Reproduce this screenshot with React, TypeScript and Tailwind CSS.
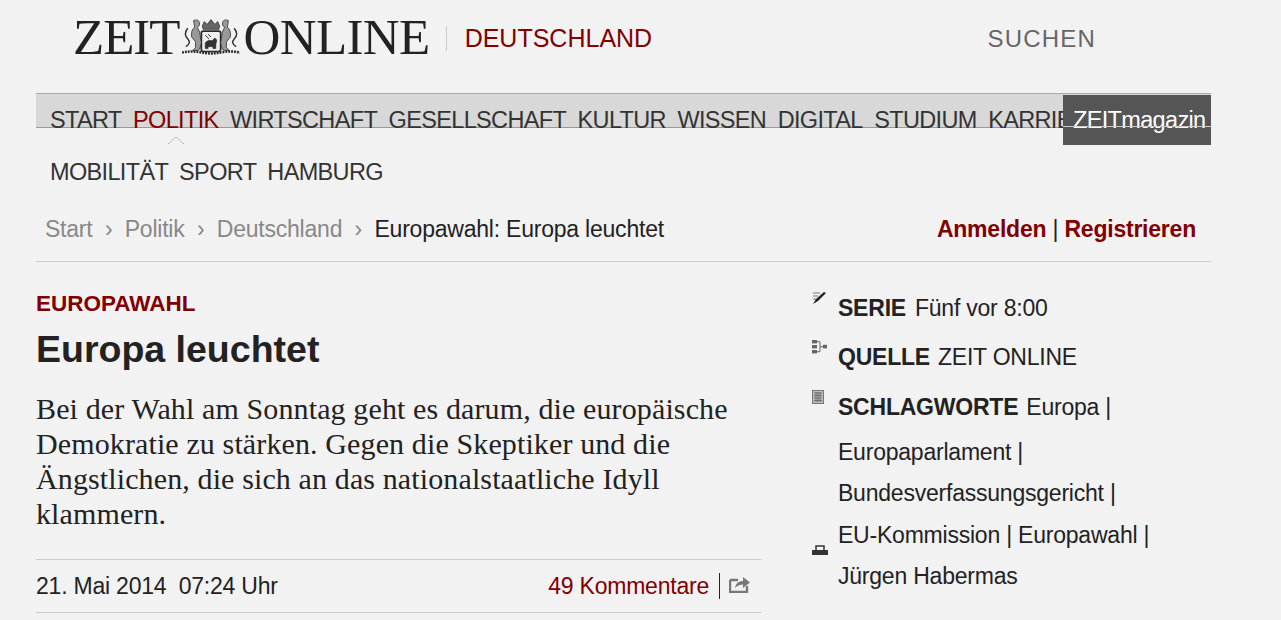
const sans = "font-['Liberation_Sans',Arial,sans-serif]";

function Crest() {
  return (
    <svg width="58" height="38" viewBox="0 0 60 38" fill="none" stroke="#2b2b2b" strokeWidth="1.1" className="ml-[3px] mr-[3px] shrink-0">
      <path d="M21 8 L23 3 L26 6 L30 1 L34 6 L37 3 L39 8 L38 11 H22 Z" fill="#666" strokeWidth="0.8" />
      <rect x="20" y="13" width="20" height="21" rx="2" fill="#eee" strokeWidth="1.8" />
      <path d="M24 25 q3 -4 7 -2 l3 -3 2 2 -1 5 v4 h-3 v-2 h-5 v2 h-3 Z" fill="#333" strokeWidth="0.6" />
      <path d="M24 17 l4 4 M27 16 l3 3" strokeWidth="1" />
      <path d="M12 2 q5 -2 6 2 q1 3 -2 5 q3 5 3 10 l1 6 q-1 6 -3 8 h-6 l3 -3 v-6 l-4 -5 q-1 -7 3 -10 Z" fill="#999" strokeWidth="0.8" />
      <path d="M48 2 q-5 -2 -6 2 q-1 3 2 5 q-3 5 -3 10 l-1 6 q1 6 3 8 h6 l-3 -3 v-6 l4 -5 q1 -7 -3 -10 Z" fill="#999" strokeWidth="0.8" />
      <path d="M6 10 q-5 6 0 11 q4 4 -2 8 M54 10 q5 6 0 11 q-4 4 2 8" strokeWidth="1.4" />
      <path d="M0 35 q10 -2 20 0 q10 2 20 0 q10 -2 20 0" strokeWidth="2.6" strokeDasharray="2 1" />
    </svg>
  );
}

function Row({ icon, children, className = "" }: { icon: React.ReactNode; children: React.ReactNode; className?: string }) {
  return (
    <div className={`flex ${className}`}>
      <div className="w-[26px] shrink-0">{icon}</div>
      <div className="min-w-0">{children}</div>
    </div>
  );
}

export default function App() {
  const first = ["START", "POLITIK", "WIRTSCHAFT", "GESELLSCHAFT", "KULTUR", "WISSEN", "DIGITAL", "STUDIUM", "KARRIERE"];
  return (
    <div className={`${sans} h-[620px] overflow-hidden bg-[#f2f2f2] text-[#222]`}>
      <div className="ml-[36px] w-[1175px]">
        <header className="flex h-[93px] items-start pl-[37px] pt-[12px]">
          <div className="flex items-center font-['Liberation_Serif',serif] text-[51px] leading-[50px] text-[#222]">
            <span className="tracking-[-1px]">ZEIT</span>
            <Crest />
            <span className="tracking-[-0.6px]">ONLINE</span>
          </div>
          <div className="ml-[16px] mt-[14px] h-[25px] w-px bg-[#ccc]" />
          <div className="ml-[18px] mt-[11px] text-[25px] leading-[30px] text-[#800000]">DEUTSCHLAND</div>
          <div className="ml-auto mr-[115px] mt-[12px] text-[24px] leading-[30px] tracking-[1.2px] text-[#666]">SUCHEN</div>
        </header>

        <nav className="relative">
          <div className="h-[35px] border-y border-t-[#aaa] border-b-[#999] bg-[#d8d8d8]">
            <ul className="flex gap-[11.5px] whitespace-nowrap pl-[14px] pt-[11px] text-[23.5px] leading-[30px] tracking-[-0.66px] text-[#333]">
              {first.map((t) => (
                <li key={t} className={t === "POLITIK" ? "text-[#800000]" : ""}>{t}</li>
              ))}
            </ul>
          </div>
          <svg width="18" height="9" viewBox="0 0 18 9" fill="none" stroke="#bbb" className="absolute left-[131px] top-[43px]">
            <path d="M1 8 L9 1 L17 8" />
          </svg>
          <div className="absolute right-0 top-[2px] h-[50px] w-[148px] bg-[#555] pl-[10px] pt-[10px] text-[23.5px] leading-[30px] tracking-[-0.66px] text-white">
            ZEITmagazin
          </div>
          <div className="absolute right-0 top-[33px] h-px w-[148px] bg-[#ccc]" />
          <ul className="flex gap-[11px] pl-[14px] pt-[29px] text-[23.5px] leading-[30px] tracking-[-0.66px] text-[#333]">
            <li>MOBILITÄT</li>
            <li>SPORT</li>
            <li>HAMBURG</li>
          </ul>
        </nav>

        <div className="mt-[26px] flex h-[49px] items-start justify-between border-b border-[#ccc] pl-[9px] pr-[15px] text-[23px] leading-[32px] tracking-[-0.22px]">
          <div className="flex gap-[12.4px] text-[#888]">
            <span>Start</span><span>›</span><span>Politik</span><span>›</span><span>Deutschland</span><span>›</span>
            <span className="text-[#222]">Europawahl: Europa leuchtet</span>
          </div>
          <div className="font-bold text-[#800000]">
            Anmelden <span className="font-normal text-[#222]">|</span> Registrieren
          </div>
        </div>

        <main className="flex pt-[28px]">
          <article className="w-[725px]">
            <div className="text-[22.5px] font-bold leading-[28px] text-[#800000]">EUROPAWAHL</div>
            <h1 className="mt-[8px] text-[37.5px] font-bold leading-[46px] text-[#222]">Europa leuchtet</h1>
            <p className="mt-[19px] font-['Liberation_Serif',serif] text-[30px] leading-[35px] tracking-[0.12px] text-[#222]">
              Bei der Wahl am Sonntag geht es darum, die europäische<br />
              Demokratie zu stärken. Gegen die Skeptiker und die<br />
              Ängstlichen, die sich an das nationalstaatliche Idyll<br />
              klammern.
            </p>
            <div className="mt-[28px] flex h-[54px] items-center justify-between border-y border-[#ccc] text-[23px] tracking-[-0.22px]">
              <span className="whitespace-pre">21. Mai 2014  07:24 Uhr</span>
              <div className="flex items-center">
                <span className="text-[#800000]">49 Kommentare</span>
                <span className="ml-[10px] h-[26px] w-px bg-[#222]" />
                <svg width="22" height="18" viewBox="0 0 22 18" className="ml-[9px] mr-[10px] mb-[4px]" fill="none">
                  <path d="M1 5 H9 M1 5 V17 H18 V11" stroke="#777" strokeWidth="2.4" />
                  <path d="M6 13 Q7 6 14 6 V2 L21 7.5 L14 13 V9.5 Q9 9.5 6 13 Z" fill="#777" />
                </svg>
              </div>
            </div>
          </article>

          <aside className="ml-[51px] text-[23px] leading-[32px] tracking-[-0.22px] text-[#222]">
            <Row
              className="h-[49px] pt-[2px]"
              icon={
                <svg width="14" height="14" viewBox="0 0 14 14" className="mt-[-1px]">
                  <path d="M1 2 H8 M1 5 H6 M1 8 H4" stroke="#777" strokeWidth="1.2" />
                  <path d="M1 13 L4 8 L12 1 L14 2 L6 10 Z" fill="#222" />
                </svg>
              }
            >
              <span className="font-bold">SERIE</span><span className="ml-[9px]">Fünf vor 8:00</span>
            </Row>
            <Row
              className="h-[50px] pt-[2px]"
              icon={
                <svg width="16" height="14" viewBox="0 0 16 14" className="mt-[-1px]" fill="#666">
                  <rect x="0" y="0" width="5" height="3.4" />
                  <rect x="0" y="5" width="5" height="3.4" />
                  <rect x="0" y="10" width="5" height="3.4" />
                  <path d="M5 1.7 H8 V11.7 H5 M8 6.7 H11" stroke="#666" fill="none" />
                  <rect x="11" y="4.8" width="4" height="3.6" />
                </svg>
              }
            >
              <span className="font-bold">QUELLE</span><span className="ml-[8px]">ZEIT ONLINE</span>
            </Row>
            <Row
              className="pt-[2px]"
              icon={
                <div className="flex h-[180px] flex-col justify-between">
                  <svg width="12" height="14" viewBox="0 0 12 14" className="mt-[-1px]">
                    <rect x="0.5" y="0.5" width="11" height="13" fill="#bbb" stroke="#777" />
                    <path d="M2 3 H10 M2 5.5 H10 M2 8 H10 M2 10.5 H10 M4 2 V12 M6 2 V12 M8 2 V12" stroke="#666" strokeWidth="0.8" />
                  </svg>
                  <svg width="16" height="11" viewBox="0 0 16 11" className="mb-[15px]">
                    <path d="M4 5 V1 H12 V5" fill="none" stroke="#333" strokeWidth="1.5" />
                    <path d="M0 5 H16 V10 H0 Z" fill="#333" />
                  </svg>
                </div>
              }
            >
              <div><span className="font-bold">SCHLAGWORTE</span><span className="ml-[8px]">Europa |</span></div>
              <div className="mt-[13px]">Europaparlament |</div>
              <div className="mt-[9px]">Bundesverfassungsgericht |</div>
              <div className="mt-[10px]">EU-Kommission | Europawahl |</div>
              <div className="mt-[9px]">Jürgen Habermas</div>
            </Row>
          </aside>
        </main>
      </div>
    </div>
  );
}
